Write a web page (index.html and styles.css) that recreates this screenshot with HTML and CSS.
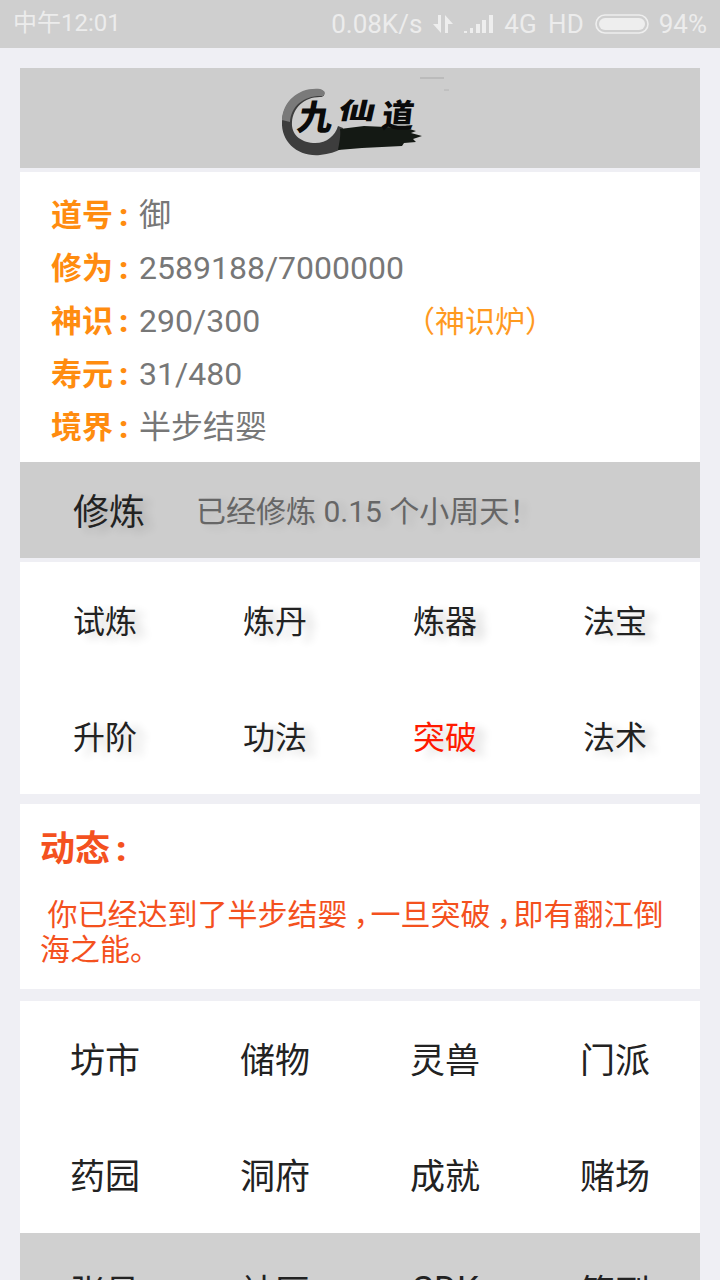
FILE: index.html
```html
<!DOCTYPE html>
<html lang="zh-CN">
<head>
<meta charset="utf-8">
<title>九仙道</title>
<link rel="stylesheet" href="styles.css">
</head>
<body>
<div class="status">
  <span class="time">中午12:01</span>
  <div class="status-right">
    <span>0.08K/s</span>
    <svg class="ic-data" width="22" height="18" viewBox="0 0 22 18"><path d="M6 0h3v18L1 9h5zM13 18V0l8 9h-5v9z" fill="#eeeeee"/></svg>
    <svg class="ic-signal" width="30" height="20" viewBox="0 0 30 20"><g fill="#eeeeee"><rect x="0" y="17" width="3" height="2"/><rect x="6" y="14" width="3" height="5"/><rect x="12" y="10" width="4" height="9"/><rect x="18" y="6" width="4" height="13"/><rect x="25" y="1" width="4" height="18"/></g></svg>
    <span class="net">4G HD</span>
    <svg class="ic-batt" width="54" height="20" viewBox="0 0 54 20"><rect x="1" y="1" width="52" height="18" rx="9" fill="none" stroke="#eeeeee" stroke-width="1.6"/><rect x="4" y="4" width="46" height="12" rx="6" fill="#eeeeee"/></svg>
    <span>94%</span>
  </div>
</div>
<main class="page">
  <header class="banner">
    <svg class="logo" width="185" height="90" viewBox="0 0 185 90">
      <g transform="translate(15 20)">
        <path d="M40 2C18-1 1 13 0 34c-1 20 16 35 38 33 9-1 16-3 21-6l2-21-5-2c-3 10-12 18-25 17C18 54 9 46 10 34 11 20 22 9 38 9c4 0 6-2 2-7z" fill="#3d3d3d"/>
        <path d="M38 1C17-1 1 13 0 32l8 2C9 18 22 7 41 8c3-2 3-5-3-7z" fill="#7a7a7a"/>
        <path d="M58 41l24-3 22 1 20 1 10 3-5 2 11 3-9 3 3 3-12 1-2 3-40 2-24 2c1-6 3-14 2-21z" fill="#141914"/>
        <text class="logo-char nine" transform="translate(14 42) skewX(-10)">九</text>
        <text class="logo-char xian" transform="translate(55 31) scale(1.1 .68) skewX(-8)">仙</text>
        <text class="logo-char" transform="translate(99 39) skewX(-6)">道</text>
      </g>
      <path d="M153 10h24" stroke="#a9a9a9" stroke-width="1"/>
      <path d="M177 22h5" stroke="#b4b4b4" stroke-width="1"/>
    </svg>
  </header>
  <section class="info">
    <div class="info-row"><b>道号<i class="colon">:</i></b><span>御</span></div>
    <div class="info-row"><b>修为<i class="colon">:</i></b><span>2589188/7000000</span></div>
    <div class="info-row"><b>神识<i class="colon">:</i></b><span class="val">290/300</span><a class="link">（神识炉）</a></div>
    <div class="info-row"><b>寿元<i class="colon">:</i></b><span>31/480</span></div>
    <div class="info-row"><b>境界<i class="colon">:</i></b><span>半步结婴</span></div>
  </section>
  <section class="cultivate">
    <span class="c-btn">修炼</span>
    <span class="c-msg">已经修炼 0.15 个小周天！</span>
  </section>
  <section class="grid shadowed">
    <span>试炼</span><span>炼丹</span><span>炼器</span><span>法宝</span>
    <span>升阶</span><span>功法</span><span class="red">突破</span><span>法术</span>
  </section>
  <section class="news">
    <h2>动态<i class="colon">:</i></h2>
    <p>&nbsp;你已经达到了半步结婴<span class="comma">，</span>一旦突破<span class="comma">，</span>即有翻江倒海之能。</p>
  </section>
  <section class="grid large">
    <span>坊市</span><span>储物</span><span>灵兽</span><span>门派</span>
    <span>药园</span><span>洞府</span><span>成就</span><span>赌场</span>
  </section>
  <section class="grid large gray">
    <span>张号</span><span>社区</span><span>CDK</span><span>签到</span>
  </section>
</main>
</body>
</html>
```
FILE: styles.css
```css
* { box-sizing: border-box; }
html, body { margin: 0; height: 1280px; overflow: hidden; }
body {
  background: #efeff4;
  font-family: Roboto, "Noto Sans CJK SC", sans-serif;
  color: #222;
}
.status {
  height: 48px;
  background: #cfcfcf;
  color: #ececec;
  display: flex;
  justify-content: space-between;
  align-items: center;
  padding: 0 13px 0 13px;
  font-size: 26px;
}
.time { font-size: 24px; line-height: 48px; margin-top: -2px; }
.status-right { display: flex; align-items: center; gap: 10px; }
.net { word-spacing: 5px; margin-right: 1px; }
.page { padding: 20px 20px 0; }
.banner { height: 100px; background: #cdcdcd; display: flex; justify-content: center; align-items: center; }
.logo { margin-right: 1px; margin-bottom: 10px; }
.logo-char { font-family: "Noto Sans CJK SC", sans-serif; font-size: 32px; font-weight: 900; fill: #0a0a0a; }
.nine { font-size: 35px; }
.xian { font-size: 34px; }
.info { margin-top: 4px; background: #fff; height: 290px; padding: 17px 31px 0; }
.info-row { display: flex; align-items: center; height: 53px; font-size: 32px; line-height: 53px; color: #777; }
.info-row b { color: #ff8c0f; font-size: 31px; font-weight: 700; width: 88px; flex: none; }
.colon { font-style: normal; font-weight: 900; margin-left: 6px; }
.val { width: 266px; flex: none; }
.link { color: #ff9a1f; font-size: 30px; }
.cultivate { background: #cdcdcd; height: 96px; display: flex; align-items: center; padding-left: 53px; }
.c-btn { font-size: 36px; color: #222; text-shadow: 8px 4px 9px rgba(0,0,0,.16); width: 123px; flex: none; margin-top: -3px; }
.c-msg { font-size: 30px; color: #666; text-shadow: 6px 3px 9px rgba(0,0,0,.1); margin-top: -3px; }
.grid { display: grid; grid-template-columns: repeat(4, 1fr); background: #fff; margin-top: 4px; text-align: center; grid-auto-rows: 116px; align-items: center; }
.grid span { font-size: 32px; margin-top: -3px; }
.shadowed { height: 232px; }
.shadowed span { text-shadow: 10px 4px 9px rgba(0,0,0,.16); }
.red { color: #ff1a00; }
.news { margin-top: 10px; background: #fff; height: 185px; padding: 24px 20px 0; color: #f4511e; }
.news h2 { margin: 0; font-size: 35px; font-weight: 700; line-height: 44px; }
.news p { margin: 25px 0 0; font-size: 30px; line-height: 35px; }
.comma { font-feature-settings: "palt"; padding-left: 8px; }
.large { margin-top: 12px; }
.large span { font-size: 35px; margin-top: -3px; }
.gray { background: #d0d0d0; margin-top: 0; }
```
